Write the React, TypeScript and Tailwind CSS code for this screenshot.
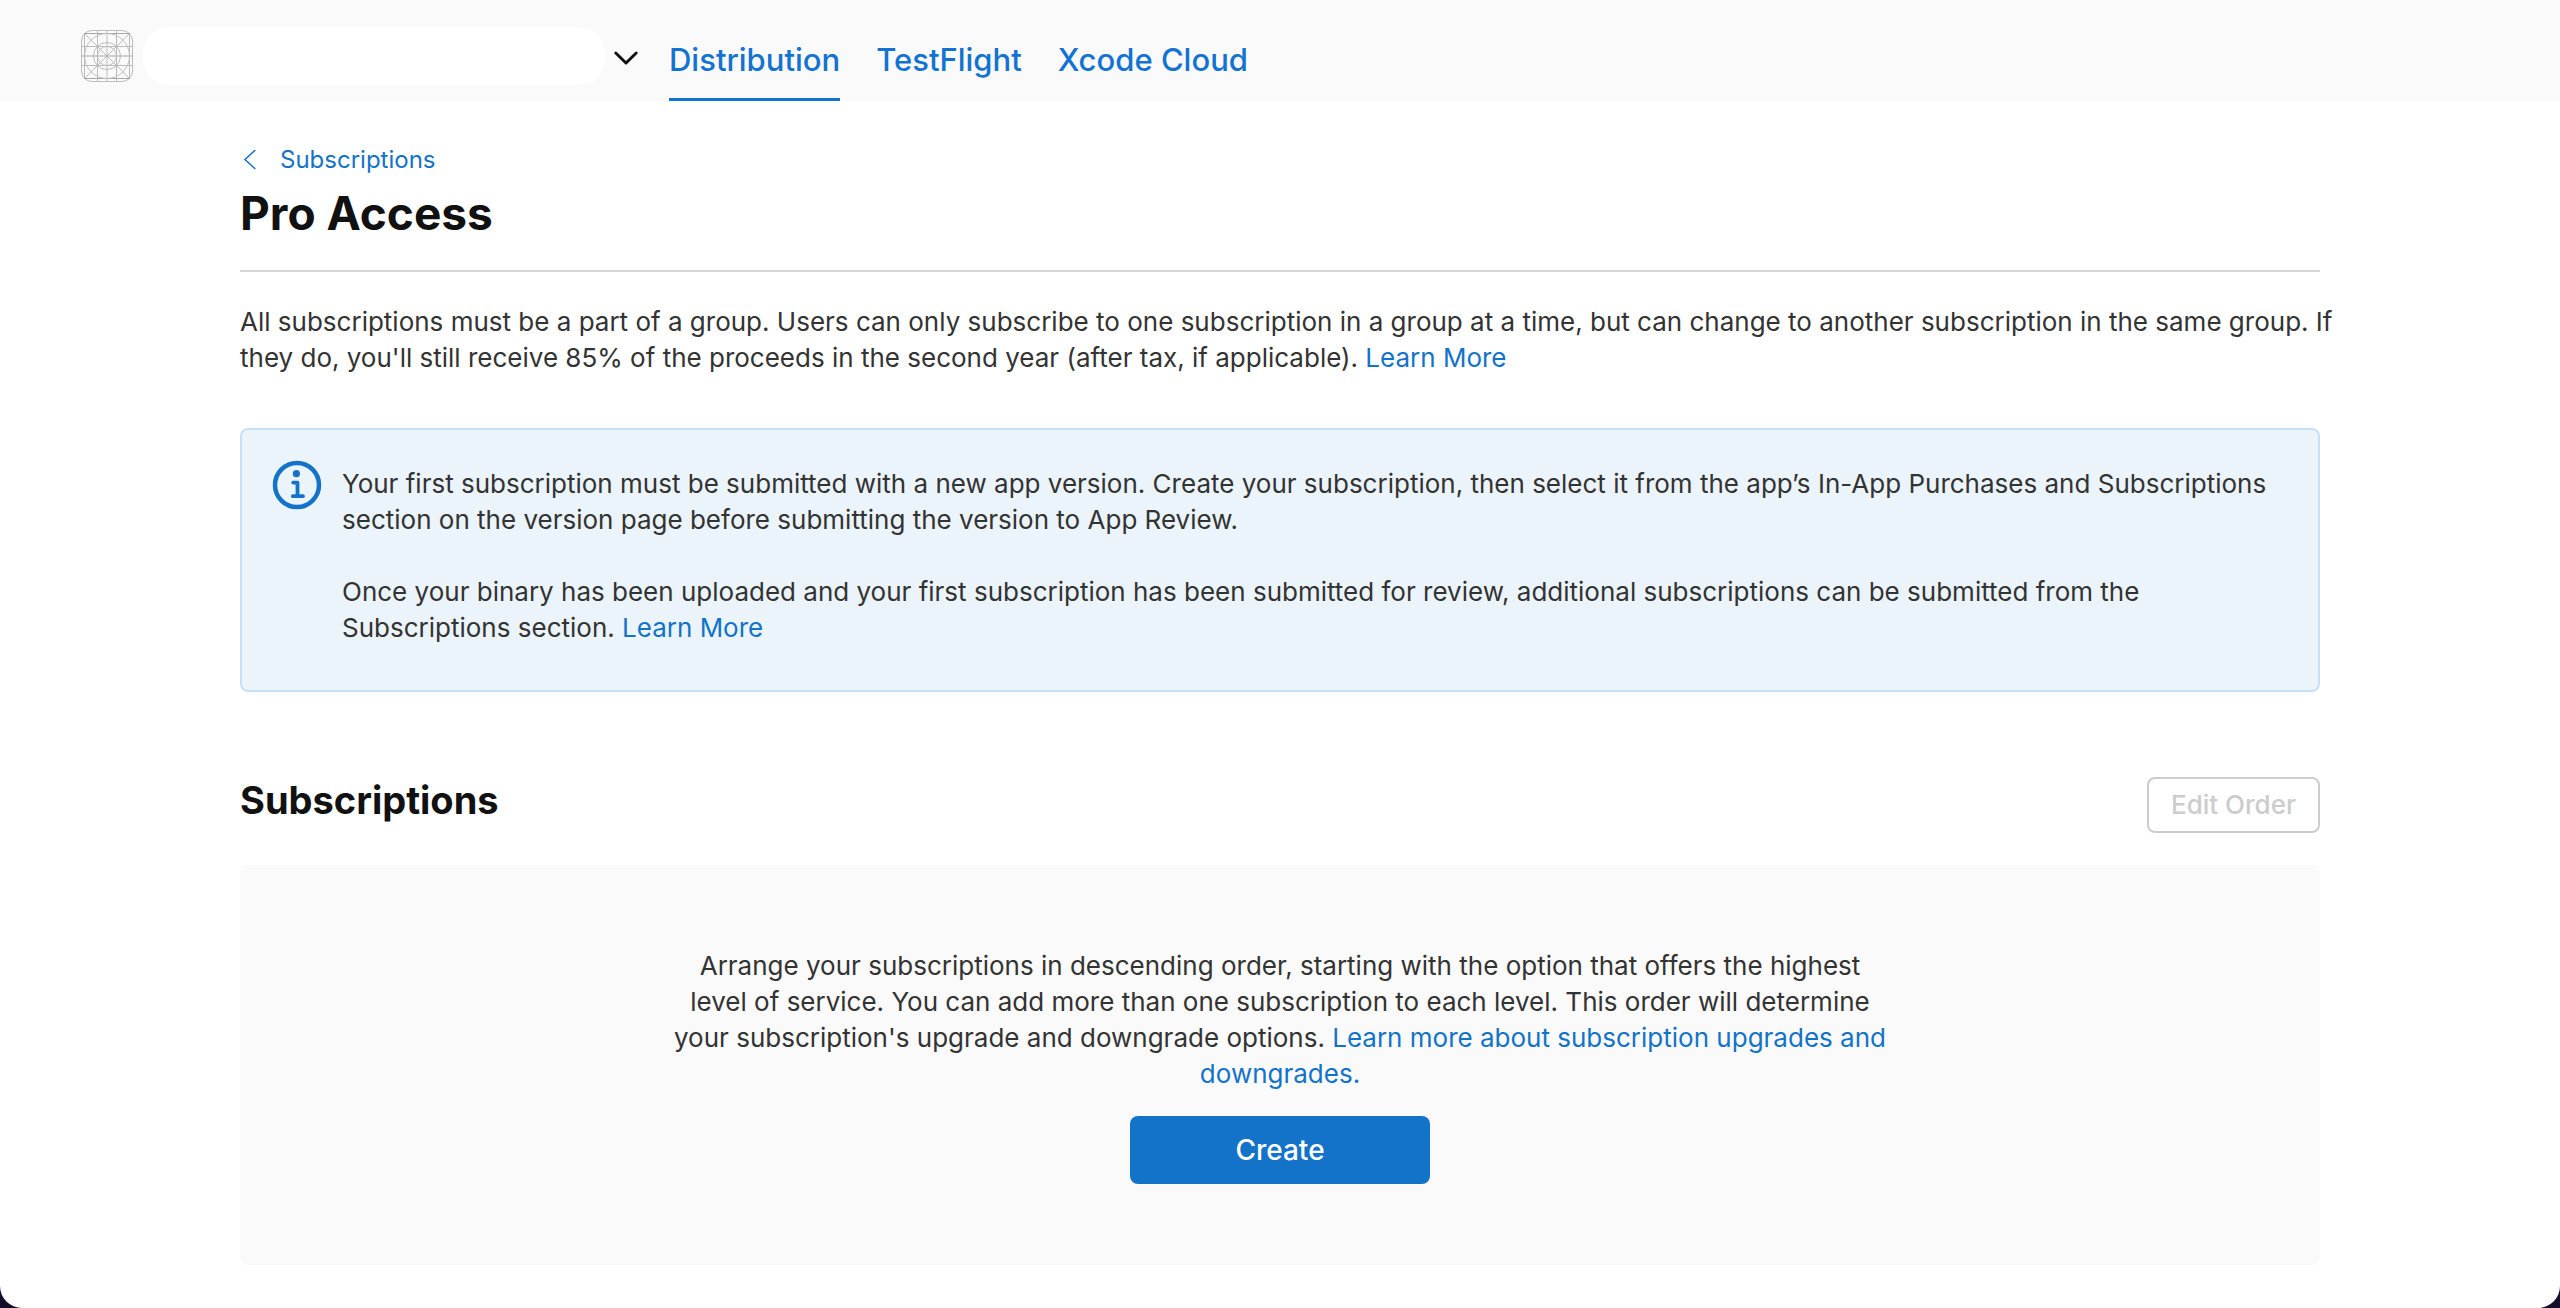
import React from "react";

function InfoIcon() {
  return (
    <svg className="size-[50px] shrink-0" viewBox="0 0 50 50" fill="none" aria-hidden="true">
      <circle cx="25" cy="25" r="22" stroke="#1273c9" strokeWidth="4.5" />
      <circle cx="24.4" cy="13.7" r="3.6" fill="#1273c9" />
      <path d="M21.2 22.6h4.3V36M20.8 36.2h10.2" stroke="#1273c9" strokeWidth="3.8" strokeLinecap="round" strokeLinejoin="round" />
    </svg>
  );
}

function AppIcon() {
  return (
    <svg className="size-[52px] shrink-0" viewBox="0 0 52 52" fill="none" stroke="#bdbdbd" aria-hidden="true">
      <rect x="0.5" y="0.5" width="51" height="51" rx="10.5" />
      <path d="M16.5 0.5v51M35.5 0.5v51M0.5 16.5h51M0.5 35.5h51M3.5 3.5l45 45M48.5 3.5l-45 45M3.5 3v46M48.5 3v46M26 0.5v51" />
      <path d="M3 3.5h46M3 48.5h46M0.5 26h51" stroke="#a6a6a6" />
      <circle cx="26" cy="26" r="22.5" />
      <circle cx="26" cy="26" r="13.5" />
      <circle cx="26" cy="26" r="9.5" />
    </svg>
  );
}

const tabs = ["Distribution", "TestFlight", "Xcode Cloud"];

export default function App() {
  return (
    <div className="bg-[#150c2b]">
      <div className="min-h-screen overflow-hidden rounded-b-[22px] bg-white pb-[43px] font-['Inter',sans-serif] text-[26px] leading-[36px] text-[#333]">
        <header className="flex h-[101px] bg-[#fafafa] pl-[81px]">
          <div className="flex items-center pt-[10px]">
            <AppIcon />
            <div className="ml-2.5 h-[58px] w-[462px] rounded-[26px] bg-white" />
            <button aria-label="Choose app" className="ml-[7px]">
              <svg className="size-[28px]" viewBox="0 0 28 28" fill="none" stroke="#111" strokeWidth="3" strokeLinecap="round" strokeLinejoin="round">
                <path d="M3.8 11l10.2 10L24.2 11" />
              </svg>
            </button>
          </div>
          <nav className="ml-[29px] flex gap-9 text-[31px] font-medium text-[#1273d2]">
            {tabs.map((t, i) => (
              <a key={t} href="#" className={i === 0 ? "border-b-[3px] border-[#1273d2] pt-[42px]" : "pt-[42px]"}>
                {t}
              </a>
            ))}
          </nav>
        </header>
        <main className="mx-60">
          <a href="#" className="mt-[41px] flex w-fit items-center text-[24px] text-[#1273c9]">
            <svg className="mr-5 size-5" viewBox="0 0 20 20" fill="none" stroke="currentColor" strokeWidth="1.5">
              <path d="M15.3 0L5 9.5l10.3 9.5" />
            </svg>
            Subscriptions
          </a>
          <h1 className="mt-[7px] text-[46px] font-bold leading-[56px] text-[#111]">Pro Access</h1>
          <hr className="mt-[29px] border-t-2 border-[#d6d6d6]" />
          <p className="-mr-6 mt-8">
            All subscriptions must be a part of a group. Users can only subscribe to one subscription in a group at a time, but can change to another subscription in the same group. If they do, you'll still receive 85% of the proceeds in the second year (after tax, if applicable). <a href="#" className="text-[#1273c9]">Learn More</a>
          </p>
          <section className="mt-[52px] flex gap-5 rounded-lg border-2 border-[#c8e0f4] bg-[#ebf3fb] px-[30px] pb-[44px] pt-[30px]">
            <InfoIcon />
            <div className="pt-[6px]">
              <p>Your first subscription must be submitted with a new app version. Create your subscription, then select it from the app’s In-App Purchases and Subscriptions section on the version page before submitting the version to App Review.</p>
              <p className="mt-9">Once your binary has been uploaded and your first subscription has been submitted for review, additional subscriptions can be submitted from the Subscriptions section. <a href="#" className="text-[#1273c9]">Learn More</a></p>
            </div>
          </section>
          <div className="mt-[85px] flex items-start justify-between">
            <h2 className="text-[38px] font-bold leading-[46px] text-[#111]">Subscriptions</h2>
            <button disabled className="h-[56px] rounded-lg border-2 border-[#ccc] px-[22px] font-medium text-[#ccc]">Edit Order</button>
          </div>
          <section className="mt-8 flex flex-col items-center rounded-lg bg-[#fafafa] pb-[81px] pt-[83px] text-center">
            <p className="w-full max-w-[1220px]">
              Arrange your subscriptions in descending order, starting with the option that offers the highest level of service. You can add more than one subscription to each level. This order will determine your subscription's upgrade and downgrade options. <a href="#" className="text-[#1273c9]">Learn more about subscription upgrades and downgrades.</a>
            </p>
            <button className="mt-6 h-[68px] w-[300px] rounded-lg bg-[#1273c9] text-[28px] font-medium text-white">Create</button>
          </section>
        </main>
      </div>
    </div>
  );
}
